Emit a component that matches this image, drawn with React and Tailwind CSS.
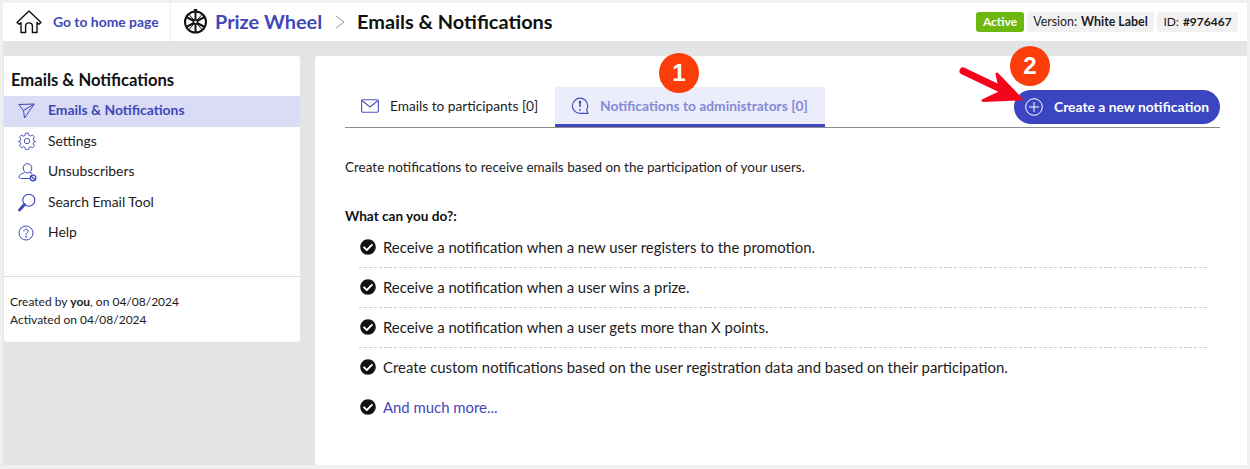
import { FaCheckCircle } from 'react-icons/fa';

const INDIGO = 'text-[#3f48b8]';

const HomeIcon = () => (
    <svg width="26" height="24" viewBox="0 0 26 24" fill="none" stroke="#111" strokeWidth="1.4" strokeLinejoin="round" strokeLinecap="round">
        <path d="M1 12.5 13 1l12 11.5-2.2 1.8L21 12.6V22.5h-4.6v-6.2a3.4 3.4 0 0 0-6.8 0v6.2H5V12.6l-1.8 1.7z" />
    </svg>
);

const WheelIcon = () => (
    <svg width="25" height="26" viewBox="0 0 25 26" fill="none" stroke="#111" strokeWidth="1.5">
        <circle cx="12.5" cy="14" r="10.5" strokeWidth="2" />
        <circle cx="12.5" cy="14" r="2" />
        <path d="M12.5 4v8M12.5 16v8M3.500 9l7.400 4M14.200 15l7.400 4M21.500 9l-7.400 4M10.800 15l-7.400 4" strokeWidth="2" />
        <path d="M6 6.500 10.800 12M19 6.500 14.200 12M6 21.500 10.800 16M19 21.500 14.200 16" strokeWidth="1" />
        <path d="M10.500 1h4l-2 4z" fill="#111" stroke="none" />
    </svg>
);

const CrumbChevron = () => (
    <svg width="10" height="14" viewBox="0 0 10 14" fill="none" stroke="#999" strokeWidth="1" className="ml-[13px] mt-[2px]">
        <path d="m1 1 8 6-8 6" />
    </svg>
);

const PlaneIcon = () => (
    <svg width="17" height="16" viewBox="0 0 17 16" fill="none" stroke="#3f48b8" strokeWidth="1" strokeLinejoin="round">
        <path d="M.8 1.500 16.200 1 6.500 15 5.500 7.500zM5.500 7.500 16.200 1" />
    </svg>
);

const GearIcon = () => (
    <svg width="18" height="18" viewBox="0 0 24 24" fill="none" stroke="#3f48b8" strokeWidth="1.200" strokeLinejoin="round">
        <path d="M10 1.500h4l.6 3 2.200 1 2.600-1.600 2.600 3-1.800 2.400.6 2.200 2.700 1v.1l-2.700 1-.6 2.200 1.800 2.400-2.600 3-2.600-1.600-2.200 1-.6 3h-4l-.6-3-2.200-1-2.600 1.600-2.600-3 1.800-2.400-.6-2.200-2.700-1v-.1l2.700-1 .6-2.200-1.800-2.400 2.600-3L7.200 5.500l2.200-1z" />
        <circle cx="12" cy="12" r="3.600" />
    </svg>
);

const UserBanIcon = () => (
    <svg width="19" height="20" viewBox="0 0 19 20" fill="none" stroke="#3f48b8" strokeWidth="1">
        <path d="M5.200 6a4.300 4.300 0 1 1 8.600 0c0 2.700-1.800 5-4.300 5s-4.300-2.300-4.300-5z" />
        <path d="M11.500 16.500H3.200C1.800 16.500 1 15.700 1 14.800c0-1.700 2.500-3.300 5.600-4M12 10.700c.8.200 1.600.5 2.300.9" />
        <circle cx="15" cy="16" r="2.800" strokeWidth="1.300" />
        <path d="m13.200 14.200 3.600 3.600" strokeWidth="1.300" />
    </svg>
);

const SearchIcon = () => (
    <svg width="18" height="19" viewBox="0 0 18 19" fill="none" stroke="#3f48b8">
        <circle cx="10.800" cy="7.200" r="6" strokeWidth="1.100" />
        <path d="m6.500 11.500-5 5.500" strokeWidth="2.800" strokeLinecap="round" />
    </svg>
);

const HelpIcon = () => (
    <svg width="16" height="16" viewBox="0 0 16 16" fill="none" stroke="#3f48b8" strokeWidth="1">
        <circle cx="8" cy="8" r="7" />
        <path d="M5.900 6.200a2.100 2.100 0 1 1 3.300 1.700c-.8.500-1.200 1-1.200 1.800" strokeLinecap="round" />
        <circle cx="8" cy="11.700" r=".5" fill="#3f48b8" />
    </svg>
);

const MailIcon = () => (
    <svg width="18" height="14" viewBox="0 0 18 14" fill="none" stroke="#4b53b8" strokeWidth="1.100">
        <rect x=".6" y=".8" width="16.800" height="12.400" rx="1.200" />
        <path d="m1 1.500 8 6.500 8-6.500" />
    </svg>
);

const NoticeIcon = () => (
    <svg width="18" height="18" viewBox="0 0 18 18" fill="none" stroke="#3f48b8" strokeWidth="1.100">
        <path d="M16.300 16.400H9a7.600 7.600 0 1 1 6.700-3.900l1.300 3.900z" strokeLinejoin="round" />
        <path d="M9 5v5" strokeWidth="1.500" />
        <circle cx="9" cy="5" r="1.300" fill="#3f48b8" stroke="none" />
        <circle cx="9" cy="12.800" r=".9" fill="#3f48b8" stroke="none" />
    </svg>
);

const PlusIcon = () => (
    <svg width="18" height="18" viewBox="0 0 18 18" fill="none" stroke="#fff" strokeWidth="1">
        <circle cx="9" cy="9" r="8.300" />
        <path d="M9 4v10M4 9h10" />
    </svg>
);

const RedArrow = () => (
    <svg width="66" height="40" viewBox="0 0 66 40" className="absolute left-[643px] top-[9px]">
        <path d="M5 6 47 26" stroke="#f5051c" strokeWidth="7" strokeLinecap="round" />
        <path d="M39 9 63 34 25 35.500 43 27z" fill="#f5051c" stroke="#f5051c" strokeWidth="3" strokeLinejoin="round" />
    </svg>
);

const Marker = ({ className, children }) => (
    <div className={`absolute w-10 h-10 rounded-full bg-[#fb3c0b] text-white text-[24px] font-bold flex items-center justify-center font-['Liberation_Sans',sans-serif] ${className}`}>
        {children}
    </div>
);

const menu = [
    { label: 'Emails & Notifications', icon: <PlaneIcon />, active: true },
    { label: 'Settings', icon: <GearIcon /> },
    { label: 'Unsubscribers', icon: <UserBanIcon /> },
    { label: 'Search Email Tool', icon: <SearchIcon /> },
    { label: 'Help', icon: <HelpIcon /> },
];

const features = [
    'Receive a notification when a new user registers to the promotion.',
    'Receive a notification when a user wins a prize.',
    'Receive a notification when a user gets more than X points.',
    'Create custom notifications based on the user registration data and based on their participation.',
];

export default function App() {
    return (
        <div className="w-[1250px] h-[469px] overflow-hidden flex flex-col bg-[#f0f0f0] pt-[3px] pl-[3px] pr-[3px] pb-[4px] font-['Lato',sans-serif] text-[#1c1c1c]">
            <header className="h-[38px] shrink-0 bg-white flex items-center">
                <a className="w-[168px] h-full flex items-center pl-[13px] border-r border-[#eeeeee]">
                    <HomeIcon />
                    <span className={`ml-[11px] text-[13.900px] font-bold ${INDIGO}`}>Go to home page</span>
                </a>
                <div className="flex items-center pl-3 pb-px">
                    <WheelIcon />
                    <span className={`ml-[7px] text-[19.900px] font-bold ${INDIGO}`}>Prize Wheel</span>
                    <CrumbChevron />
                    <span className="ml-[12px] text-[19.900px] font-bold text-[#111]">Emails &amp; Notifications</span>
                </div>
                <div className="ml-auto mr-[9px] flex items-center gap-[3px] text-[12px]">
                    <span className="h-5 w-12 rounded-[3px] bg-[#6cb80f] text-white font-bold flex items-center justify-center">Active</span>
                    <span className="h-5 w-[127px] rounded-[3px] bg-[#f1f1f1] text-[12.400px] flex items-center justify-center gap-1">Version: <b>White Label</b></span>
                    <span className="h-5 w-[81px] rounded-[3px] bg-[#f1f1f1] flex items-center justify-center gap-1">ID: <b>#976467</b></span>
                </div>
            </header>

            <div className="flex-1 flex bg-[#e3e4e6] pt-[15px] pl-px">
                <aside className="w-[296px] h-[286px] shrink-0 bg-white rounded-b-[3px] rounded-tr-[3px] flex flex-col">
                    <h2 className="pl-[7px] pt-[14px] h-10 text-[16.600px] font-bold text-[#111] leading-5">Emails &amp; Notifications</h2>
                    <nav className="flex flex-col">
                        {menu.map((item) => (
                            <a
                                key={item.label}
                                className={`h-[30.500px] pb-px flex items-center text-[13.900px] ${item.active ? `bg-[#dadbf5] font-bold ${INDIGO}` : ''}`}
                            >
                                <span className="w-11 pl-[14px] flex items-center">{item.icon}</span>
                                {item.label}
                            </a>
                        ))}
                    </nav>
                    <div className="mt-[27px] border-t border-[#dddddd] pt-[16px] pl-[6px] text-[12px] leading-[18px]">
                        <p>Created by <b>you</b>, on 04/08/2024</p>
                        <p>Activated on 04/08/2024</p>
                    </div>
                </aside>

                <main className="relative flex-1 ml-[15px] bg-white pl-[30px] pr-[27px] pt-[31px] rounded-tl-[3px]">
                    <div className="flex justify-between border-b border-[#8c8c8c] h-[41px]">
                        <div className="flex">
                            <div className="w-[210px] h-[38px] flex items-center pl-4 gap-[11px] text-[13.700px]">
                                <MailIcon />
                                Emails to participants [0]
                            </div>
                            <div className="w-[270px] h-10 pt-px flex items-center pl-4 gap-[11px] text-[13.800px] font-bold text-[#8489d8] bg-[#ecedfa] border-b-[3px] border-[#3f48b8]">
                                <NoticeIcon />
                                Notifications to administrators [0]
                            </div>
                        </div>
                        <button className="self-start mt-[3px] w-[206px] h-[34px] rounded-full bg-[#3b45c2] text-white text-[13.850px] font-bold flex items-center pl-[11px] gap-[11px]">
                            <PlusIcon />
                            Create a new notification
                        </button>
                    </div>

                    <p className="mt-[30px] text-[13.500px] leading-[18px]">Create notifications to receive emails based on the participation of your users.</p>
                    <p className="mt-[31px] text-[13.600px] leading-[18px] font-bold text-[#111]">What can you do?:</p>

                    <ul className="mt-[3.500px] ml-[14px] mr-[13px]">
                        {features.map((text, i) => (
                            <li
                                key={text}
                                className={`h-[39.750px] pb-px flex items-center gap-[7px] text-[14.900px] ${i < features.length - 1 ? 'border-b border-dashed border-[#cccccc]' : ''}`}
                            >
                                <FaCheckCircle size={16} className="ml-px text-[#111] shrink-0" />
                                {text}
                            </li>
                        ))}
                        <li className={`h-[39.750px] pb-px flex items-center gap-[7px] text-[14.900px] ${INDIGO}`}>
                            <FaCheckCircle size={16} className="ml-px text-[#111] shrink-0" />
                            And much more...
                        </li>
                    </ul>

                    <Marker className="left-[344px] top-[-3px]">1</Marker>
                    <Marker className="left-[695px] top-[-10px]">2</Marker>
                    <RedArrow />
                </main>
            </div>
        </div>
    );
}
